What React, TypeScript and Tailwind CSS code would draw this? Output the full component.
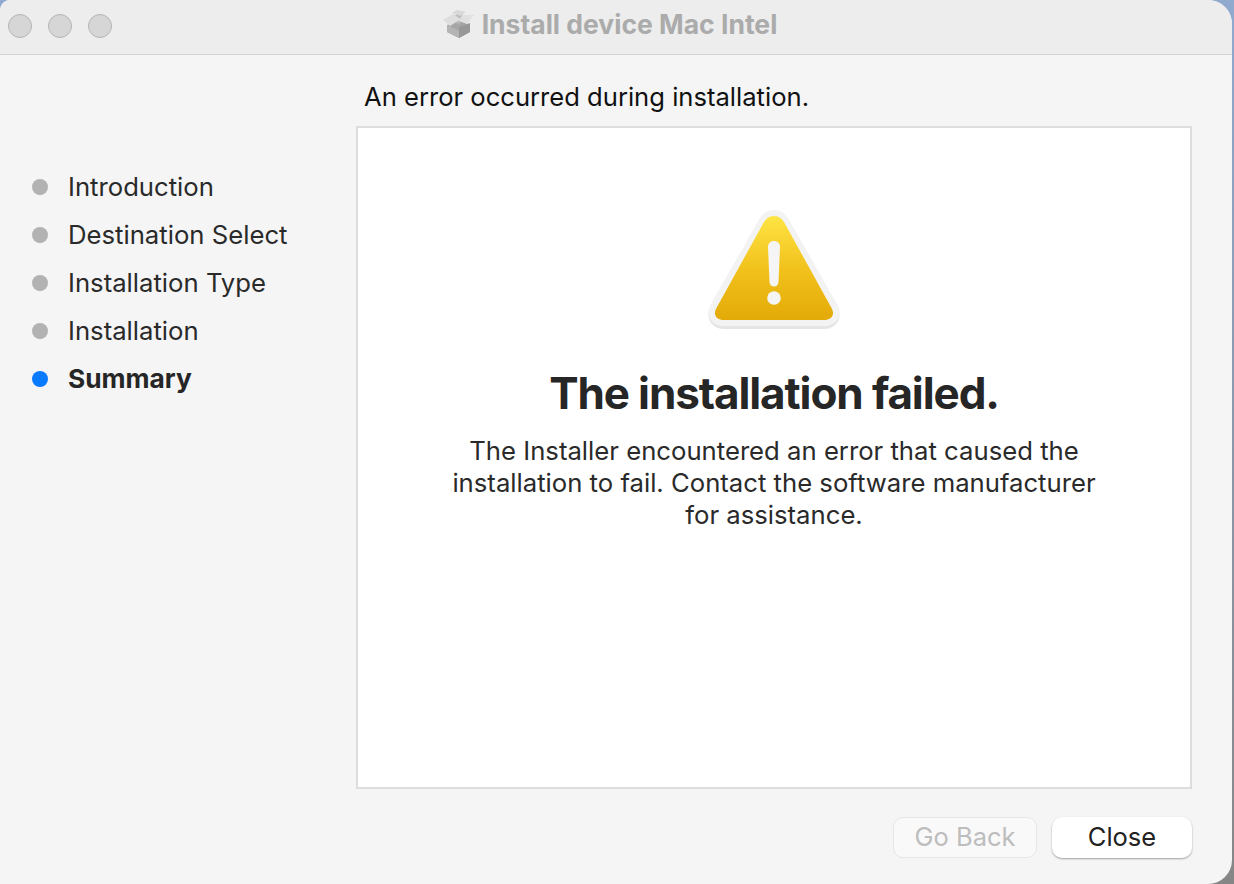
import React from "react";

const steps = ["Introduction", "Destination Select", "Installation Type", "Installation"];

function BoxIcon() {
  return (
    <svg width="32" height="32" viewBox="5 4 32 32">
      <path d="M10 20 L22 15 L33 20 L33 27 L22 33 L10 27 Z" fill="#a6a6a6" />
      <path d="M22 22 L33 18 L33 27 L22 33 Z" fill="#989898" />
      <path d="M12 13 L23 8 L31 13 L21 19 Z" fill="#b9b9b9" />
      <path d="M6 15 L16 9 L24 14 L13 21 Z" fill="#dedede" />
      <path d="M15 8 L20 5 L29 7 L23 11 Z" fill="#d8d8d8" />
      <path d="M25 10 L37 10 L30 19 L22 16 Z" fill="#e0e0e0" />
      <path d="M10 20 L22 26 L22 33 L10 27 Z" fill="#b4b4b4" />
    </svg>
  );
}

function WarningIcon() {
  return (
    <svg width="136" height="124" viewBox="0 0 136 124">
      <defs>
        <linearGradient id="warnFill" x1="0" y1="0" x2="0" y2="1">
          <stop offset="0" stopColor="#fee445" />
          <stop offset="0.5" stopColor="#f2c21c" />
          <stop offset="1" stopColor="#e3aa08" />
        </linearGradient>
      </defs>
      <path d="M68 4 C62 4 57 7 54 12 L5 98 C-2 110 6 121 18 121 L118 121 C130 121 138 110 131 98 L82 12 C79 7 74 4 68 4 Z" fill="#cfcfcf" opacity="0.55" />
      <path d="M68 2 C62 2 57 5 54 10 L5 96 C-2 108 6 118 18 118 L118 118 C130 118 138 108 131 96 L82 10 C79 5 74 2 68 2 Z" fill="#f3f3f3" />
      <path d="M68 8 C63 8 60 11 58 14 L11 99 C6 107 11 112 18 112 L118 112 C125 112 130 107 125 99 L78 14 C76 11 73 8 68 8 Z" fill="url(#warnFill)" />
      <path d="M62 39 C62 31 74 31 74 39 L72.5 74 C72 80 64 80 63.5 74 Z" fill="#f5f5f5" />
      <circle cx="68" cy="90" r="6.8" fill="#f5f5f5" />
    </svg>
  );
}

export default function App() {
  return (
    <div
      className="flex h-[884px] w-[1234px] bg-gradient-to-b from-[#8fa9cf] to-[#868686]"
      style={{ fontFamily: "Inter, 'Liberation Sans', sans-serif" }}
    >
      <div className="flex h-[884px] w-[1232px] flex-col overflow-hidden rounded-tr-[24px] rounded-br-[24px] rounded-tl-[10px] bg-[#f5f5f5]">
        <div className="relative flex h-[55px] shrink-0 items-center justify-center border-b border-[#d2d2d2] bg-[#ededed] pl-[12px]">
          <div className="absolute left-[8px] top-[14px] flex gap-4">
            <div className="h-6 w-6 rounded-full border border-[#b4b4b4] bg-[#d6d6d6]" />
            <div className="h-6 w-6 rounded-full border border-[#b4b4b4] bg-[#d6d6d6]" />
            <div className="h-6 w-6 rounded-full border border-[#b4b4b4] bg-[#d6d6d6]" />
          </div>
          <div className="flex items-center gap-[8px] pb-[5px] pr-[25px]">
            <BoxIcon />
            <span className="text-[26.5px] font-bold text-[#ababab]">Install device Mac Intel</span>
          </div>
        </div>
        <div className="flex min-h-0 flex-1">
          <div className="w-[356px] shrink-0 pl-8 pt-[108px]">
            {steps.map((s) => (
              <div key={s} className="flex h-12 items-center gap-5">
                <div className="h-4 w-4 rounded-full bg-[#b2b2b2]" />
                <span className="text-[25.7px] text-[#2a2a2a]">{s}</span>
              </div>
            ))}
            <div className="flex h-12 items-center gap-5">
              <div className="h-4 w-4 rounded-full bg-[#0a7aff]" />
              <span className="text-[26.3px] font-bold text-[#262626]">Summary</span>
            </div>
          </div>
          <div className="flex w-[836px] flex-col">
            <div className="flex h-[71px] items-center pl-[8px] pt-[13px] text-[25.6px] text-[#111111]">
              An error occurred during installation.
            </div>
            <div className="flex h-[663px] flex-col items-center border-2 border-[#dddddd] bg-white pt-[80px]">
              <WarningIcon />
              <h1 className="mt-[33px] text-[44px] font-bold leading-[56px] tracking-[-1.1px] text-[#262626]">
                The installation failed.
              </h1>
              <p className="mt-[14px] w-[680px] text-center text-[25.7px] leading-[32px] text-[#2a2a2a]">
                The Installer encountered an error that caused the
                <br />
                installation to fail. Contact the software manufacturer
                <br />
                for assistance.
              </p>
            </div>
            <div className="flex justify-end gap-[15px] pt-[28px]">
              <button className="h-[41px] w-[144px] rounded-[10px] border border-[#e6e6e6] bg-[#f9f9f9] text-[25.5px] text-[#bdbdbd]">
                Go Back
              </button>
              <button className="h-[41px] w-[140px] rounded-[10px] bg-white text-[25.5px] text-[#222222] shadow-[0_1px_2px_rgba(0,0,0,0.35)]">
                Close
              </button>
            </div>
          </div>
        </div>
      </div>
    </div>
  );
}
